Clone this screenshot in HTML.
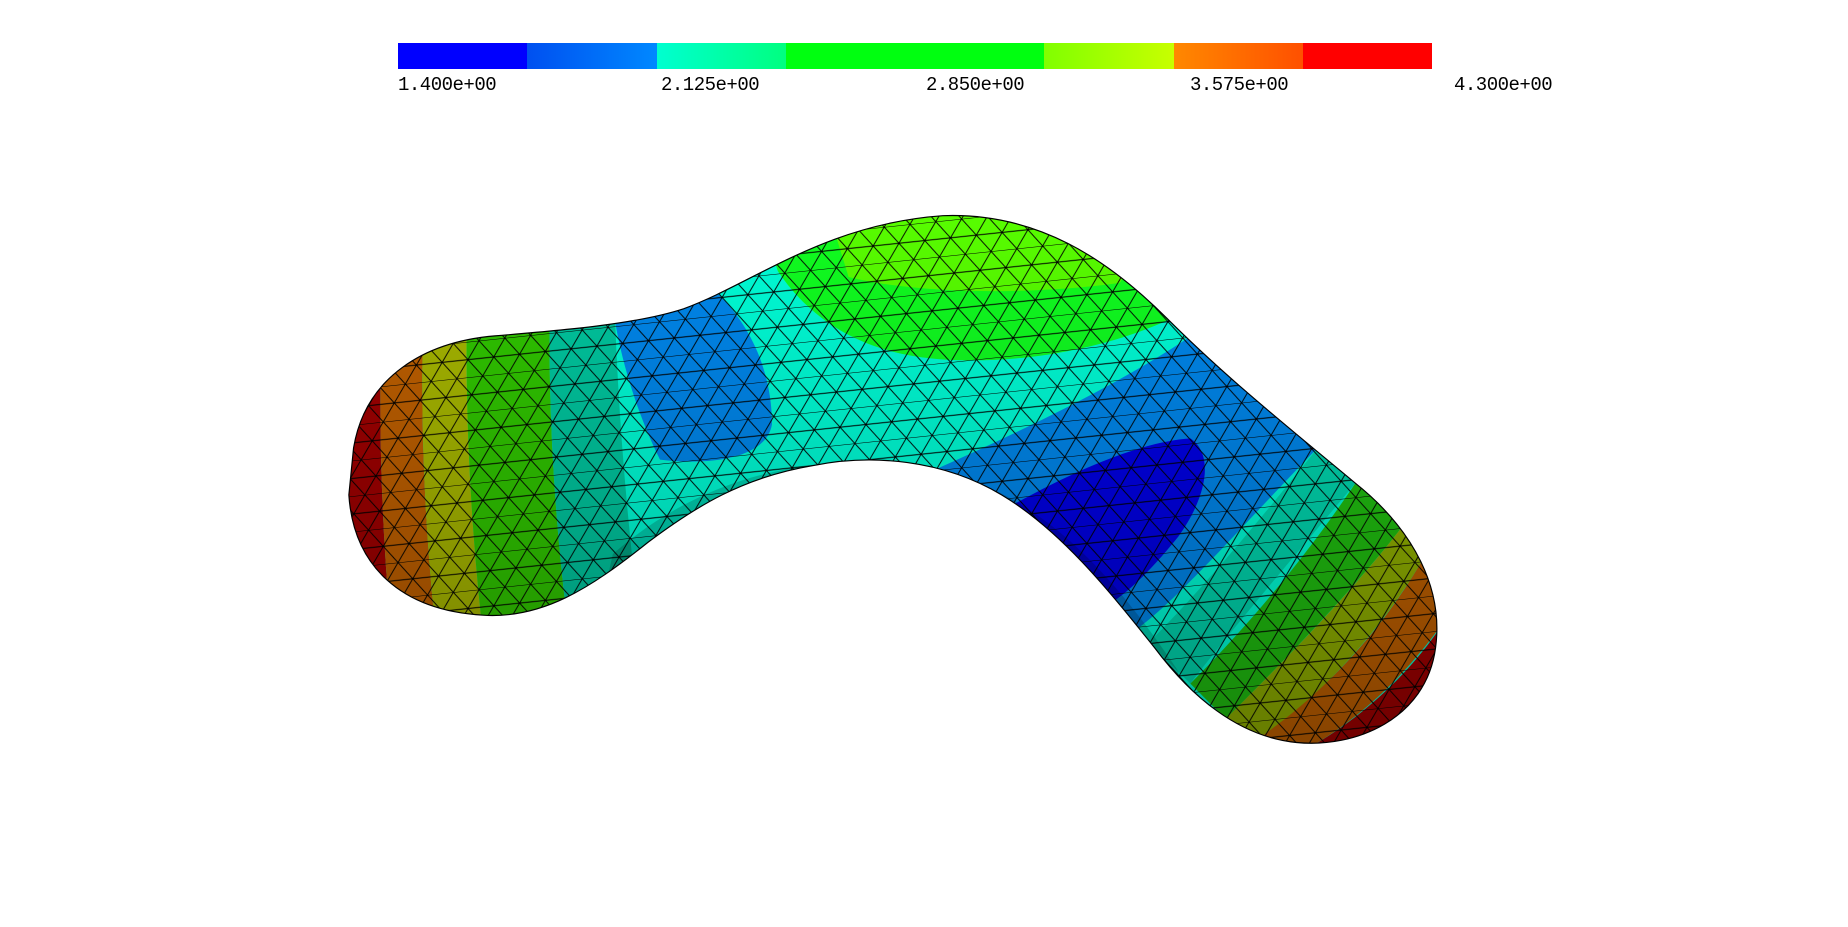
<!DOCTYPE html>
<html><head><style>
html,body{margin:0;padding:0;background:#fff;width:1848px;height:927px;overflow:hidden}
.lbl{position:absolute;top:74px;font-family:"Liberation Mono",monospace;font-size:19px;color:#000;letter-spacing:-0.5px}
</style></head><body>
<div style="position:absolute;left:398px;top:43px;width:1034px;height:26px;display:flex">
<div style="flex:1;background:#0000ff"></div>
<div style="flex:1;background:linear-gradient(90deg,#0050f0,#0088ff)"></div>
<div style="flex:1;background:linear-gradient(90deg,#00ffd0,#00ff80)"></div>
<div style="flex:2;background:#00ff10"></div>
<div style="flex:1;background:linear-gradient(90deg,#80ff00,#c8ff00)"></div>
<div style="flex:1;background:linear-gradient(90deg,#ff8800,#ff5000)"></div>
<div style="flex:1;background:#ff0000"></div>
</div>
<div class="lbl" style="left:398px">1.400e+00</div>
<div class="lbl" style="left:661px">2.125e+00</div>
<div class="lbl" style="left:926px">2.850e+00</div>
<div class="lbl" style="left:1190px">3.575e+00</div>
<div class="lbl" style="left:1454px">4.300e+00</div>
<svg width="1848" height="927" style="position:absolute;left:0;top:0">
<defs>
<clipPath id="c"><path id="sh" d="M300,380 C310,320 360,290 420,285 C480,280 540,275 580,262 C640,240 700,190 800,183 C880,180 940,220 990,270 C1040,320 1090,360 1150,410 C1200,450 1225,500 1218,550 C1210,610 1150,635 1100,630 C1050,625 1010,590 980,550 C940,500 900,450 850,420 C800,390 740,385 690,395 C630,405 590,430 550,460 C500,500 460,525 410,522 C340,518 300,480 296,420 Z"/></clipPath>
<pattern id="m" width="44" height="30" patternUnits="userSpaceOnUse" patternTransform="rotate(-6)">
<path d="M0,0H44M0,15H44M0,0L22,30M22,0L44,30M44,0L22,30M22,0L0,30" stroke="#000" stroke-width="0.8" fill="none"/>
</pattern>
<linearGradient id="sd" x1="0" y1="0" x2="0" y2="1"><stop offset="0" stop-color="#000" stop-opacity="0"/><stop offset="1" stop-color="#000" stop-opacity="0.3"/></linearGradient>
</defs>
<g transform="scale(1.17857)">
<g clip-path="url(#c)">
<rect x="280" y="170" width="960" height="480" fill="#00ffd8"/>
<path d="M280,170 L330,170 Q310,400 345,650 L280,650Z" fill="#a00000"/>
<path d="M330,170 L365,170 Q345,400 385,650 L345,650 Q310,400 330,170Z" fill="#c06000"/>
<path d="M365,170 L400,170 Q385,400 425,650 L385,650 Q345,400 365,170Z" fill="#a8b800"/>
<path d="M400,170 L470,170 Q455,400 500,650 L425,650 Q385,400 400,170Z" fill="#30c800"/>
<path d="M470,170 L520,170 Q520,400 560,650 L500,650 Q455,400 470,170Z" fill="#00c8a0"/>
<path d="M520,260 L610,250 C640,280 655,320 655,360 C650,390 600,395 560,390 C540,350 525,300 520,260Z" fill="#0088ee"/>
<path d="M640,170 L1000,170 L1010,262 C960,290 880,310 800,305 C720,300 680,260 660,230Z" fill="#10ff20"/>
<path d="M700,170 L880,170 C940,200 960,230 950,240 C880,250 780,250 720,235Z" fill="#58ff00"/>
<path d="M1015,282 C1060,330 1100,360 1118,380 C1050,450 990,520 955,540 C900,470 860,430 790,400 C880,360 960,320 1015,282Z" fill="#0088ee"/>
<path d="M860,428 C920,395 970,375 1010,372 C1030,385 1025,420 1000,455 C980,480 960,500 945,510 C910,470 890,450 860,428Z" fill="#0000e8"/>
<path d="M1118,380 L1150,410 C1100,470 1040,540 1010,580 L975,545 C1020,500 1070,440 1118,380Z" fill="#00d8b0"/>
<path d="M1150,410 L1195,440 C1150,500 1080,570 1040,610 L1010,580 C1060,530 1110,470 1150,410Z" fill="#20c010"/>
<path d="M1195,440 L1210,470 C1170,540 1110,600 1070,625 L1040,610 C1090,560 1150,500 1195,440Z" fill="#90b000"/>
<path d="M1210,470 L1230,520 C1190,580 1140,620 1100,640 L1070,625 C1120,590 1170,540 1210,470Z" fill="#c06000"/>
<path d="M1230,520 L1250,560 L1250,660 L1090,660 L1100,640 C1150,615 1200,570 1230,520Z" fill="#a00000"/>
<path d="M520,470 C600,400 700,380 800,400 C880,420 940,480 1000,570 L1000,650 L480,650Z" fill="#000" opacity="0.18"/>
<rect x="280" y="170" width="960" height="480" fill="url(#m)"/>
<rect x="280" y="170" width="960" height="480" fill="url(#sd)"/>
</g>
<use href="#sh" fill="none" stroke="#000" stroke-width="1"/>
</g>
</svg>
</body></html>
